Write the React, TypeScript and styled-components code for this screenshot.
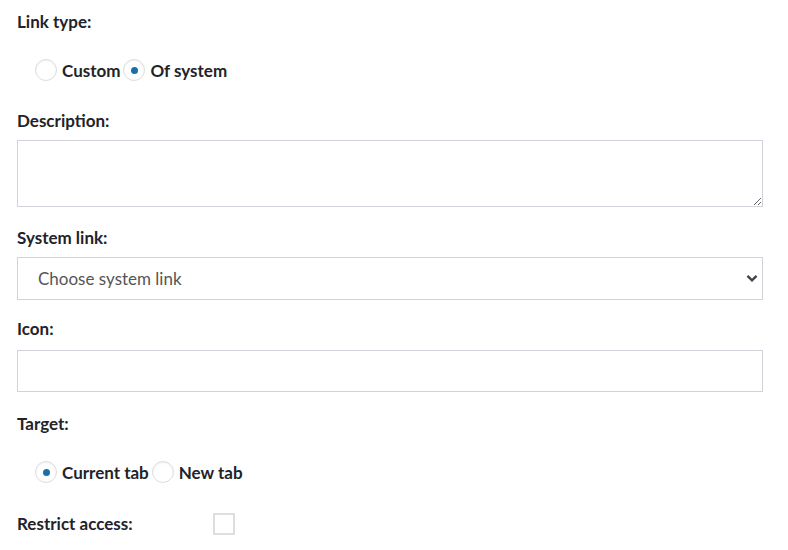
import React, { useState } from "react";
import styled, { createGlobalStyle } from "styled-components";

const Global = createGlobalStyle`
  html, body { margin: 0; padding: 0; background: #fff; }
  body {
    font-family: "Lato", "Noto Sans", sans-serif;
    color: #222328;
  }
  * { box-sizing: border-box; }
`;

const Form = styled.form`
  display: flex;
  flex-direction: column;
  padding: 10px 25px 0 17px;
  width: 788px;
`;

const Field = styled.div<{ $top?: number; $gap?: number }>`
  display: flex;
  flex-direction: column;
  gap: ${(p) => p.$gap ?? 7}px;
  margin-top: ${(p) => p.$top ?? 0}px;
`;

const Label = styled.label`
  display: block;
  font-size: 17px;
  font-weight: 700;
  line-height: 24px;
  color: #222328;
`;

const RadioRow = styled.div`
  display: flex;
  align-items: center;
  gap: 3px;
  padding-left: 18px;
  margin-top: 25px;
  height: 22px;
`;

const RadioOption = styled.label`
  display: flex;
  align-items: center;
  gap: 5px;
  font-size: 17px;
  font-weight: 700;
  cursor: pointer;
`;

const RadioCircle = styled.span<{ $checked: boolean }>`
  width: 22px;
  height: 22px;
  border-radius: 50%;
  border: 1px solid #dcdcdc;
  box-shadow: inset 0 1px 2px rgba(0, 0, 0, 0.06);
  background: #fff;
  display: flex;
  align-items: center;
  justify-content: center;
  &::after {
    content: "";
    width: 7px;
    height: 7px;
    border-radius: 50%;
    background: #1a6fa6;
    display: ${(p) => (p.$checked ? "block" : "none")};
  }
`;

const HiddenInput = styled.input`
  display: none;
`;

const TextArea = styled.textarea`
  display: block;
  width: 100%;
  height: 67px;
  border: 1px solid #d2d2da;
  border-radius: 0;
  padding: 8px 20px;
  font-family: inherit;
  font-size: 17px;
  resize: vertical;
  outline: none;
`;

const SelectWrap = styled.div`
  position: relative;
  height: 43px;
`;

const Select = styled.select`
  width: 100%;
  height: 43px;
  border: 1px solid #d2d2da;
  border-radius: 0;
  background: #fff;
  padding: 0 40px 0 20px;
  font-family: inherit;
  font-size: 17px;
  color: #555;
  appearance: none;
  outline: none;
`;

const Chevron = styled.svg`
  position: absolute;
  right: 5px;
  top: 17px;
  width: 12px;
  height: 9px;
  pointer-events: none;
`;

const TextInput = styled.input`
  display: block;
  width: 100%;
  height: 42px;
  border: 1px solid #d2d2da;
  border-radius: 0;
  padding: 0 20px;
  font-family: inherit;
  font-size: 17px;
  outline: none;
`;

const CheckRow = styled.div`
  display: flex;
  align-items: center;
  margin-top: 29px;
  height: 24px;
`;

const CheckLabel = styled(Label)`
  width: 196px;
`;

const CheckBox = styled.span`
  width: 22px;
  height: 22px;
  border: 2px solid #dedede;
  background: #fff;
`;

type Option = { value: string; text: string };

function RadioGroup({
  name,
  options,
  value,
  onChange,
}: {
  name: string;
  options: Option[];
  value: string;
  onChange: (v: string) => void;
}) {
  return (
    <RadioRow>
      {options.map((o) => (
        <RadioOption key={o.value}>
          <HiddenInput
            type="radio"
            name={name}
            checked={value === o.value}
            onChange={() => onChange(o.value)}
          />
          <RadioCircle $checked={value === o.value} />
          {o.text}
        </RadioOption>
      ))}
    </RadioRow>
  );
}

export default function App() {
  const [linkType, setLinkType] = useState("system");
  const [target, setTarget] = useState("current");

  return (
    <>
      <Global />
      <Form onSubmit={(e) => e.preventDefault()}>
        <Label>Link type:</Label>
        <RadioGroup
          name="linkType"
          value={linkType}
          onChange={setLinkType}
          options={[
            { value: "custom", text: "Custom" },
            { value: "system", text: "Of system" },
          ]}
        />

        <Field $top={28}>
          <Label>Description:</Label>
          <TextArea />
        </Field>

        <Field $top={19}>
          <Label>System link:</Label>
          <SelectWrap>
            <Select defaultValue="">
              <option value="">Choose system link</option>
            </Select>
            <Chevron viewBox="0 0 12 9">
              <path
                d="M1.5 1.8 L6 6.3 L10.5 1.8"
                fill="none"
                stroke="#444"
                strokeWidth="2.4"
              />
            </Chevron>
          </SelectWrap>
        </Field>

        <Field $top={17} $gap={9}>
          <Label>Icon:</Label>
          <TextInput type="text" />
        </Field>

        <Field $top={20}>
          <Label>Target:</Label>
        </Field>
        <RadioGroup
          name="target"
          value={target}
          onChange={setTarget}
          options={[
            { value: "current", text: "Current tab" },
            { value: "new", text: "New tab" },
          ]}
        />

        <CheckRow>
          <CheckLabel>Restrict access:</CheckLabel>
          <CheckBox />
        </CheckRow>
      </Form>
    </>
  );
}
